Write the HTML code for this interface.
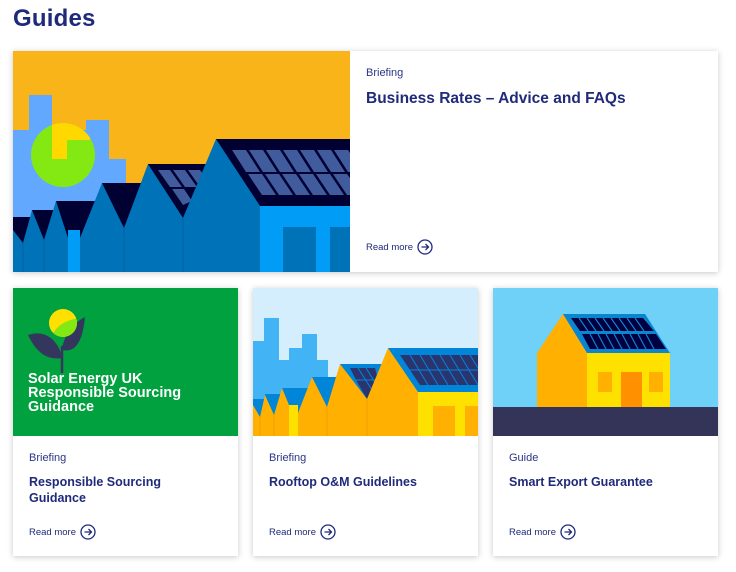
<!DOCTYPE html>
<html><head><meta charset="utf-8"><style>
*{margin:0;padding:0;box-sizing:border-box}
body{width:736px;height:572px;background:#fff;font-family:"Liberation Sans",sans-serif;color:#1f2a7a;position:relative;overflow:hidden}
h1{position:absolute;left:13px;top:5px;font-size:24px;font-weight:bold;color:#1f2a7a;letter-spacing:0.2px}
.card{position:absolute;background:#fff;box-shadow:0 1px 6px rgba(0,0,0,0.22)}
.card svg{position:absolute;display:block}
.cat{position:absolute;font-size:11px;color:#2a3585}
.title{position:absolute;font-weight:bold;color:#1f2a7a}
.rm{position:absolute;font-size:9.5px;color:#1f2a7a;display:flex;align-items:center;gap:4px}
.rm svg{position:static}
</style></head><body>
<h1>Guides</h1>

<div class="card" style="left:13px;top:51px;width:705px;height:221px">
<svg style="left:0;top:0" width="337" height="221" viewBox="13 51 337 221">
<rect x="13" y="51" width="337" height="221" fill="#f8b418"/>
<polygon fill="#62a8ff" points="13,130 29,130 29,95 52,95 52,130 86,130 86,120 109,120 109,159 126,159 126,230 13,230"/>
<defs><clipPath id="c1"><circle cx="63" cy="155" r="32"/></clipPath></defs>
<circle cx="63" cy="155" r="32" fill="#84e812"/>
<g clip-path="url(#c1)"><polygon fill="#ffd800" points="52,110 90,110 90,140 67,140 67,159 52,159"/></g>
<polygon fill="#000033" points="13,217 32,217 32,210 56,210 56,201 102,201 102,183 148,183 148,164 216,164 216,139 350,139 350,272 13,272"/>
<rect x="68" y="230" width="12" height="42" fill="#009cf6"/>
<rect x="260" y="206" width="90" height="66" fill="#009cf6"/>
<rect x="283" y="227" width="33" height="45" fill="#0072b8"/>
<rect x="330" y="227" width="20" height="45" fill="#0072b8"/>
<g fill="#405c9c">
<polygon points="232,150 246,150 260,172 246,172"/><polygon points="249,150 263,150 277,172 263,172"/><polygon points="266,150 280,150 294,172 280,172"/><polygon points="283,150 297,150 311,172 297,172"/><polygon points="300,150 314,150 328,172 314,172"/><polygon points="317,150 331,150 345,172 331,172"/><polygon points="334,150 348,150 350,153 350,172 348,172"/>
<polygon points="248,174 262,174 276,195 262,195"/><polygon points="265,174 279,174 293,195 279,195"/><polygon points="282,174 296,174 310,195 296,195"/><polygon points="299,174 313,174 327,195 313,195"/><polygon points="316,174 330,174 344,195 330,195"/><polygon points="333,174 347,174 350,178 350,195 347,195"/>
<polygon points="158,170 170,170 182,187 170,187"/><polygon points="173,170 185,170 197,187 185,187"/><polygon points="188,170 200,170 203,174 203,187 200,187"/>
<polygon points="172,189 184,189 192,201 183,205"/>
</g>
<polygon fill="#0072b8" points="13,230 23,243 32,210 44,240 56,201 68,238 68,272 13,272"/>
<polygon fill="#0072b8" points="80,272 80,238 102,183 124,228 148,164 183,218 216,139 260,206 260,272"/>
<g stroke="#005d98" stroke-width="0.7"><line x1="23" y1="243" x2="23" y2="272"/><line x1="44" y1="240" x2="44" y2="272"/><line x1="124" y1="228" x2="124" y2="272"/><line x1="183" y1="218" x2="183" y2="272"/></g>
</svg>
<div class="cat" style="left:353px;top:16px">Briefing</div>
<div class="title" style="left:353px;top:39px;font-size:15.5px">Business Rates – Advice and FAQs</div>
<div class="rm" style="left:353px;top:188px">Read more <svg width="16" height="16" viewBox="0 0 16 16"><circle cx="8" cy="8" r="7" fill="none" stroke="#1f2a7a" stroke-width="1.3"/><path d="M4.5 8H11.5M8.5 5L11.5 8 8.5 11" fill="none" stroke="#1f2a7a" stroke-width="1.3"/></svg></div>
</div>

<div class="card" style="left:13px;top:288px;width:225px;height:268px">
<svg style="left:0;top:0" width="225" height="148" viewBox="13 288 225 148">
<rect x="13" y="288" width="225" height="148" fill="#00a13e"/>
<path d="M62,346 L62,373" stroke="#35365e" stroke-width="2.5"/>
<path d="M62,358 C50,360 38,356 28,335 C42,330 56,336 62,356Z" fill="#35365e"/>
<path d="M62,350 C72,352 82,348 85,317 C76,322 66,330 62,348Z" fill="#35365e"/>
<defs><clipPath id="c2"><circle cx="63" cy="323" r="14"/></clipPath></defs>
<circle cx="63" cy="323" r="14" fill="#ffe000"/>
<g clip-path="url(#c2)"><path d="M50,340 C55,325 66,320 80,318 L80,340Z" fill="#84e812"/></g>
</svg>
<div style="position:absolute;left:15px;top:84px;color:#fff;font-weight:bold;font-size:14.5px;line-height:14px">Solar Energy UK<br>Responsible Sourcing<br>Guidance</div>
<div class="cat" style="left:16px;top:164px">Briefing</div>
<div class="title" style="left:16px;top:186px;font-size:12.5px;line-height:16px">Responsible Sourcing<br>Guidance</div>
<div class="rm" style="left:16px;top:236px">Read more <svg width="16" height="16" viewBox="0 0 16 16"><circle cx="8" cy="8" r="7" fill="none" stroke="#1f2a7a" stroke-width="1.3"/><path d="M4.5 8H11.5M8.5 5L11.5 8 8.5 11" fill="none" stroke="#1f2a7a" stroke-width="1.3"/></svg></div>
</div>

<div class="card" style="left:253px;top:288px;width:225px;height:268px">
<svg style="left:0;top:0" width="225" height="148" viewBox="253 288 225 148">
<rect x="253" y="288" width="225" height="148" fill="#d4eefd"/>
<polygon fill="#42b4f5" points="253,341 264,341 264,318 279,318 279,360 289,360 289,348 302,348 302,334 317,334 317,360 328,360 328,420 253,420"/>
<polygon fill="#0085d8" points="253,399 265,399 265,394 282,394 282,388 312,388 312,377 340,377 340,364 388,364 388,348 478,348 478,436 253,436"/>
<rect x="289" y="405" width="9" height="31" fill="#ffe100"/>
<rect x="418" y="392" width="60" height="44" fill="#ffe100"/>
<rect x="433" y="406" width="22" height="30" fill="#ffb000"/>
<rect x="465" y="406" width="13" height="30" fill="#ffb000"/>
<g fill="#2a3570">
<polygon points="400,355 478,355 478,385 420,385"/>
<polygon points="350,368 375,368 378,380 367,399 357,382"/>
</g>
<g stroke="#0085d8" stroke-width="1"><line x1="400" y1="370" x2="478" y2="370"/><line x1="410" y1="355" x2="428" y2="385"/><line x1="420" y1="355" x2="438" y2="385"/><line x1="430" y1="355" x2="448" y2="385"/><line x1="440" y1="355" x2="458" y2="385"/><line x1="450" y1="355" x2="468" y2="385"/><line x1="460" y1="355" x2="478" y2="385"/><line x1="470" y1="355" x2="478" y2="368"/><line x1="358" y1="368" x2="372" y2="390"/><line x1="366" y1="368" x2="376" y2="384"/><line x1="352" y1="380" x2="378" y2="380"/></g>
<polygon fill="#ffb000" points="253,405 260,417 265,395 274,415 282,388 289,405 289,436 253,436"/>
<polygon fill="#ffb000" points="298,436 298,413 312,377 327,407 340,364 367,399 388,348 418,392 418,436"/>
<g stroke="#e89c00" stroke-width="0.7"><line x1="260" y1="417" x2="260" y2="436"/><line x1="274" y1="415" x2="274" y2="436"/><line x1="327" y1="407" x2="327" y2="436"/><line x1="367" y1="399" x2="367" y2="436"/></g>
</svg>
<div class="cat" style="left:16px;top:164px">Briefing</div>
<div class="title" style="left:16px;top:186px;font-size:12.5px;line-height:16px">Rooftop O&amp;M Guidelines</div>
<div class="rm" style="left:16px;top:236px">Read more <svg width="16" height="16" viewBox="0 0 16 16"><circle cx="8" cy="8" r="7" fill="none" stroke="#1f2a7a" stroke-width="1.3"/><path d="M4.5 8H11.5M8.5 5L11.5 8 8.5 11" fill="none" stroke="#1f2a7a" stroke-width="1.3"/></svg></div>
</div>

<div class="card" style="left:493px;top:288px;width:225px;height:268px">
<svg style="left:0;top:0" width="225" height="148" viewBox="493 288 225 148">
<rect x="493" y="288" width="225" height="148" fill="#6fd1f8"/>
<rect x="493" y="407" width="225" height="29" fill="#343459"/>
<polygon fill="#ffb000" points="537,353 563,314 587,353 587,407 537,407"/>
<rect x="587" y="353" width="83" height="54" fill="#ffe100"/>
<polygon fill="#0a85d0" points="563,314 645,314 670,353 587,353"/>
<g fill="#000040">
<polygon points="571,318 643,318 654,331 580,331"/>
<polygon points="582,334 656,334 666,349 590,349"/>
</g>
<g stroke="#0a85d0" stroke-width="1.2">
<line x1="579" y1="318" x2="588" y2="331"/><line x1="587" y1="318" x2="596" y2="331"/><line x1="595" y1="318" x2="604" y2="331"/><line x1="603" y1="318" x2="612" y2="331"/><line x1="611" y1="318" x2="620" y2="331"/><line x1="619" y1="318" x2="628" y2="331"/><line x1="627" y1="318" x2="636" y2="331"/><line x1="635" y1="318" x2="644" y2="331"/>
<line x1="590" y1="334" x2="598" y2="349"/><line x1="598" y1="334" x2="606" y2="349"/><line x1="606" y1="334" x2="614" y2="349"/><line x1="614" y1="334" x2="622" y2="349"/><line x1="622" y1="334" x2="630" y2="349"/><line x1="630" y1="334" x2="638" y2="349"/><line x1="638" y1="334" x2="646" y2="349"/><line x1="646" y1="334" x2="654" y2="349"/>
</g>
<rect x="598" y="372" width="14" height="20" fill="#ffb000"/>
<rect x="621" y="372" width="21" height="35" fill="#ff9100"/>
<rect x="649" y="372" width="14" height="20" fill="#ffb000"/>
</svg>
<div class="cat" style="left:16px;top:164px">Guide</div>
<div class="title" style="left:16px;top:186px;font-size:12.5px;line-height:16px">Smart Export Guarantee</div>
<div class="rm" style="left:16px;top:236px">Read more <svg width="16" height="16" viewBox="0 0 16 16"><circle cx="8" cy="8" r="7" fill="none" stroke="#1f2a7a" stroke-width="1.3"/><path d="M4.5 8H11.5M8.5 5L11.5 8 8.5 11" fill="none" stroke="#1f2a7a" stroke-width="1.3"/></svg></div>
</div>
</body></html>
